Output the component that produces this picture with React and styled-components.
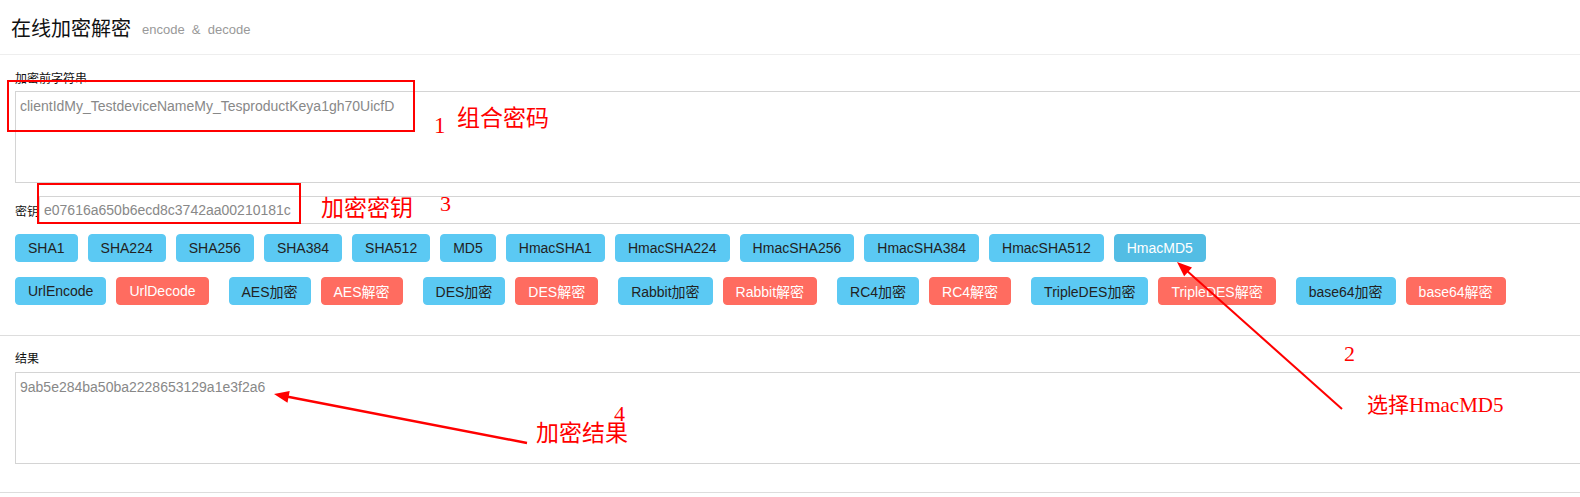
import React from 'react';
import styled, { createGlobalStyle } from 'styled-components';

const GlobalStyle = createGlobalStyle`
  html, body {
    margin: 0;
    padding: 0;
    background: #fff;
    overflow: hidden;
  }
  body {
    font-family: 'Liberation Sans', 'Noto Sans CJK SC', sans-serif;
    color: #222;
  }
`;

const Page = styled.div`
  position: relative;
  width: 1580px;
  height: 497px;
  overflow: hidden;
`;

const Header = styled.div`
  display: flex;
  align-items: center;
  height: 54px;
  padding: 0 11px;
  border-bottom: 1px solid #eee;
`;

const Title = styled.h1`
  margin: 0;
  font-size: 20px;
  font-weight: normal;
  color: #111;
`;

const SubTitle = styled.small`
  margin-left: 11px;
  font-size: 13px;
  color: #999;
  position: relative;
  top: 2px;
`;

const Section = styled.div`
  padding: ${(p) => p.$top}px 15px ${(p) => p.$bottom}px;
  border-bottom: 1px solid #ddd;
  overflow: hidden;
`;

const Label = styled.label`
  display: block;
  font-size: 12px;
  line-height: 17px;
  color: #111;
  margin-bottom: ${(p) => p.$gap}px;
`;

const TextArea = styled.textarea`
  display: block;
  box-sizing: border-box;
  width: calc(100% + 20px);
  height: 92px;
  margin: 0;
  padding: 5px 4px;
  border: 1px solid #d4d4d4;
  font-family: 'Liberation Sans', 'Noto Sans CJK SC', sans-serif;
  font-size: 14px;
  line-height: 18px;
  color: #888;
  resize: none;
  outline: none;
`;

const KeyRow = styled.div`
  display: flex;
  align-items: center;
  margin-top: 13px;
`;

const KeyLabel = styled.span`
  font-size: 12px;
  color: #111;
`;

const KeyInput = styled.input`
  flex: 1;
  box-sizing: border-box;
  height: 28px;
  margin: 0 -20px 0 0;
  padding: 0 4px;
  border: 1px solid #d4d4d4;
  font-family: 'Liberation Sans', 'Noto Sans CJK SC', sans-serif;
  font-size: 14px;
  color: #888;
  outline: none;
`;

const ButtonRow = styled.div`
  display: flex;
  gap: ${(p) => p.$gap}px;
  margin-top: ${(p) => p.$top}px;
`;

const Pair = styled.div`
  display: flex;
  gap: 10px;
`;

const colors = {
  info: { bg: '#5bc9f3', fg: '#222' },
  active: { bg: '#53bde4', fg: '#fff' },
  danger: { bg: '#ff6c60', fg: '#fff' },
};

const Btn = styled.button`
  box-sizing: border-box;
  height: 28px;
  padding: 0 12px;
  border: 1px solid ${(p) => colors[p.$kind].bg};
  border-radius: 4px;
  background: ${(p) => colors[p.$kind].bg};
  color: ${(p) => colors[p.$kind].fg};
  font-family: 'Liberation Sans', 'Noto Sans CJK SC', sans-serif;
  font-size: 14px;
  white-space: nowrap;
  cursor: pointer;
`;

const Overlay = styled.svg`
  position: absolute;
  left: 0;
  top: 0;
  pointer-events: none;
`;

const Note = styled.span`
  position: absolute;
  left: ${(p) => p.$x}px;
  top: ${(p) => p.$y}px;
  font-family: 'Liberation Serif', 'Noto Sans CJK SC', serif;
  font-size: ${(p) => p.$size}px;
  line-height: 1;
  color: #ff0000;
  white-space: nowrap;
  pointer-events: none;
`;

const hashes = [
  'SHA1', 'SHA224', 'SHA256', 'SHA384', 'SHA512', 'MD5',
  'HmacSHA1', 'HmacSHA224', 'HmacSHA256', 'HmacSHA384', 'HmacSHA512', 'HmacMD5',
];

const pairs = [
  ['UrlEncode', 'UrlDecode'],
  ['AES加密', 'AES解密'],
  ['DES加密', 'DES解密'],
  ['Rabbit加密', 'Rabbit解密'],
  ['RC4加密', 'RC4解密'],
  ['TripleDES加密', 'TripleDES解密'],
  ['base64加密', 'base64解密'],
];

const Arrow = ({ x1, y1, x2, y2, w }) => {
  const a = Math.atan2(y2 - y1, x2 - x1);
  const len = 16;
  const spread = 0.38;
  const p1 = [x2 - len * Math.cos(a - spread), y2 - len * Math.sin(a - spread)];
  const p2 = [x2 - len * Math.cos(a + spread), y2 - len * Math.sin(a + spread)];
  const bx = x2 - len * 0.8 * Math.cos(a);
  const by = y2 - len * 0.8 * Math.sin(a);
  return (
    <g>
      <line x1={x1} y1={y1} x2={bx} y2={by} stroke="#ff0000" strokeWidth={w} />
      <polygon points={`${x2},${y2} ${p1.join(',')} ${p2.join(',')}`} fill="#ff0000" />
    </g>
  );
};

export default function App() {
  return (
    <Page>
      <GlobalStyle />
      <Header>
        <Title>在线加密解密</Title>
        <SubTitle>encode &nbsp;&amp;&nbsp; decode</SubTitle>
      </Header>

      <Section $top={16} $bottom={30}>
        <Label $gap={3}>加密前字符串</Label>
        <TextArea readOnly value="clientIdMy_TestdeviceNameMy_TesproductKeya1gh70UicfD" />
        <KeyRow>
          <KeyLabel>密钥</KeyLabel>
          <KeyInput readOnly value="e07616a650b6ecd8c3742aa00210181c" />
        </KeyRow>
        <ButtonRow $gap={10} $top={10}>
          {hashes.map((h) => (
            <Btn key={h} $kind={h === 'HmacMD5' ? 'active' : 'info'}>{h}</Btn>
          ))}
        </ButtonRow>
        <ButtonRow $gap={20} $top={15}>
          {pairs.map(([a, b]) => (
            <Pair key={a}>
              <Btn $kind="info">{a}</Btn>
              <Btn $kind="danger">{b}</Btn>
            </Pair>
          ))}
        </ButtonRow>
      </Section>

      <Section $top={15} $bottom={28}>
        <Label $gap={4}>结果</Label>
        <TextArea readOnly value="9ab5e284ba50ba2228653129a1e3f2a6" />
      </Section>

      <Overlay width="1580" height="497">
        <rect x="8" y="81" width="406" height="50" fill="none" stroke="#ff0000" strokeWidth="2" />
        <rect x="38" y="184" width="262" height="39" fill="none" stroke="#ff0000" strokeWidth="2" />
        <Arrow x1={1342} y1={409} x2={1177} y2={262} w={2} />
        <Arrow x1={527} y1={443} x2={274} y2={394} w={2.5} />
      </Overlay>

      <Note $x={434} $y={114} $size={23}>1</Note>
      <Note $x={457} $y={107} $size={23}>组合密码</Note>
      <Note $x={321} $y={197} $size={23}>加密密钥</Note>
      <Note $x={440} $y={193} $size={22}>3</Note>
      <Note $x={1344} $y={343} $size={22}>2</Note>
      <Note $x={1367} $y={395} $size={21}>选择HmacMD5</Note>
      <Note $x={614} $y={403} $size={22}>4</Note>
      <Note $x={536} $y={422} $size={23}>加密结果</Note>
    </Page>
  );
}
